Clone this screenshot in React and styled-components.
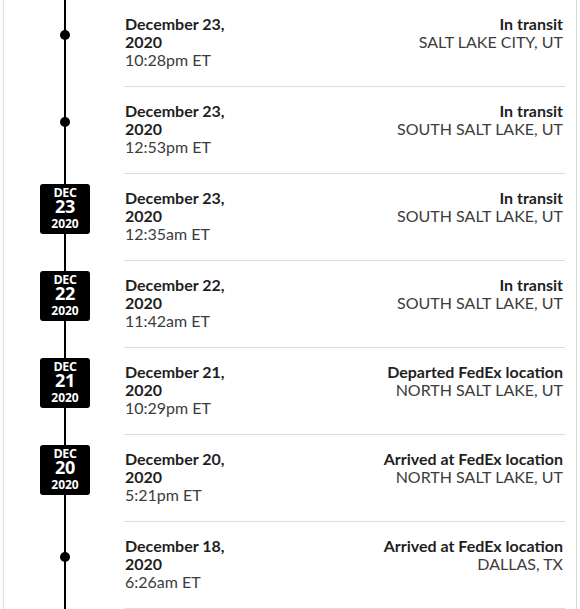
import React from 'react'
import styled, { createGlobalStyle } from 'styled-components'

const GlobalStyle = createGlobalStyle`
  html, body {
    margin: 0;
    padding: 0;
    background: #ffffff;
  }
  body {
    font-family: Lato, "Open Sans", Arial, sans-serif;
    -webkit-font-smoothing: antialiased;
  }
`

const Page = styled('div')`
  padding-left: 3px;
  width: 574px;
`

const Card = styled('ol')`
  margin: 0;
  padding: 0;
  list-style: none;
  border-left: 1px solid #e4e4e4;
  border-right: 1px solid #d9d9d9;
  box-shadow: -1px 0 2px rgba(0, 0, 0, 0.04);
`

const Row = styled('li')`
  display: flex;
`

const MarkerCell = styled('div')`
  box-sizing: border-box;
  width: 120px;
  flex: none;
  padding-left: 2px;
  padding-top: ${({ $badge }) => ($badge ? '10px' : '30px')};
  display: flex;
  flex-direction: column;
  align-items: center;
  background: linear-gradient(#000, #000) no-repeat 60px 0 / 2px 100%;
`

const Dot = styled('span')`
  width: 10px;
  height: 10px;
  border-radius: 50%;
  background: #000;
`

const Badge = styled('div')`
  box-sizing: border-box;
  width: 50px;
  height: 50px;
  border-radius: 3px;
  background: #000;
  color: #fff;
  font-family: "Open Sans", Arial, sans-serif;
  font-weight: 700;
  display: flex;
  flex-direction: column;
  align-items: center;
  padding-top: 3px;
`

const BadgeMonth = styled('span')`
  font-size: 12.5px;
  line-height: 12px;
  letter-spacing: -0.4px;
`

const BadgeDay = styled('span')`
  font-size: 18px;
  line-height: 14px;
  letter-spacing: -0.3px;
`

const BadgeYear = styled('span')`
  font-size: 12px;
  line-height: 15px;
  margin-top: 3px;
`

const Content = styled('div')`
  box-sizing: border-box;
  flex: 1;
  height: 87px;
  margin-right: 11px;
  border-bottom: 1px solid #dcdcdc;
  display: flex;
  justify-content: space-between;
  padding: 15px 2px 0 1px;
  font-size: 16px;
  line-height: 18px;
`

const When = styled('div')`
  width: 112px;
`

const Bold = styled('div')`
  font-weight: 700;
  color: #1f1f1f;
`

const Plain = styled('div')`
  color: #3c3c3c;
`

const Where = styled('div')`
  text-align: right;
`

const events = [
  { date: 'December 23, 2020', time: '10:28pm ET', status: 'In transit', place: 'SALT LAKE CITY, UT' },
  { date: 'December 23, 2020', time: '12:53pm ET', status: 'In transit', place: 'SOUTH SALT LAKE, UT' },
  { date: 'December 23, 2020', time: '12:35am ET', status: 'In transit', place: 'SOUTH SALT LAKE, UT', badge: ['DEC', '23', '2020'] },
  { date: 'December 22, 2020', time: '11:42am ET', status: 'In transit', place: 'SOUTH SALT LAKE, UT', badge: ['DEC', '22', '2020'] },
  { date: 'December 21, 2020', time: '10:29pm ET', status: 'Departed FedEx location', place: 'NORTH SALT LAKE, UT', badge: ['DEC', '21', '2020'] },
  { date: 'December 20, 2020', time: '5:21pm ET', status: 'Arrived at FedEx location', place: 'NORTH SALT LAKE, UT', badge: ['DEC', '20', '2020'] },
  { date: 'December 18, 2020', time: '6:26am ET', status: 'Arrived at FedEx location', place: 'DALLAS, TX' },
]

const App = () => {
  return (
    <Page>
      <GlobalStyle />
      <Card>
        {events.map((ev, i) => (
          <Row key={i}>
            <MarkerCell $badge={!!ev.badge}>
              {ev.badge ? (
                <Badge>
                  <BadgeMonth>{ev.badge[0]}</BadgeMonth>
                  <BadgeDay>{ev.badge[1]}</BadgeDay>
                  <BadgeYear>{ev.badge[2]}</BadgeYear>
                </Badge>
              ) : (
                <Dot />
              )}
            </MarkerCell>
            <Content>
              <When>
                <Bold>{ev.date}</Bold>
                <Plain>{ev.time}</Plain>
              </When>
              <Where>
                <Bold>{ev.status}</Bold>
                <Plain>{ev.place}</Plain>
              </Where>
            </Content>
          </Row>
        ))}
      </Card>
    </Page>
  )
}

export default App
